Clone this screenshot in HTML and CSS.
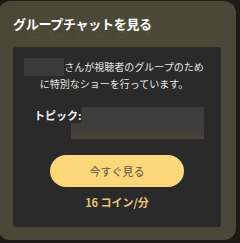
FILE: index.html
```html
<!DOCTYPE html>
<html lang="ja">
<head>
<meta charset="utf-8">
<link rel="stylesheet" href="styles.css">
</head>
<body>
<div class="modal">
  <div class="ghost">ッソをしています</div>
  <h1 class="title">グループチャットを見る</h1>
  <div class="card">
    <div class="desc">
      <span class="line"><span class="redact name"></span>さんが視聴者のグループのため</span>
      <span class="line">に特別なショーを行っています。</span>
    </div>
    <div class="topic">
      <div class="topic-row">
        <span class="topic-label">トピック:</span>
        <span class="redact topic-val"></span>
      </div>
      <div class="redact topic-val2"></div>
    </div>
    <button class="btn">今すぐ見る</button>
    <div class="price">16 コイン/分</div>
  </div>
</div>
</body>
</html>
```
FILE: styles.css
```css
html, body {
  margin: 0;
  padding: 0;
  background: #1d1a17;
  width: 240px;
  height: 243px;
  overflow: hidden;
  font-family: "Noto Sans CJK JP", "Noto Sans", sans-serif;
}
.modal {
  position: relative;
  margin: 1px 0 0 -2px;
  width: 238px;
  height: 239px;
  box-sizing: border-box;
  background: #4a4836;
  border-radius: 12px;
  padding: 0 15px 13px 15px;
  display: flex;
  flex-direction: column;
  overflow: hidden;
}
.ghost {
  position: absolute;
  left: -22px;
  top: 10px;
  font-size: 22px;
  color: rgba(255,255,255,0.04);
  white-space: nowrap;
  letter-spacing: 1px;
}
.title {
  position: relative;
  margin: 0;
  height: 46px;
  line-height: 46px;
  font-size: 13px;
  font-weight: 700;
  color: #ffffff;
  letter-spacing: -0.3px;
}
.card {
  position: relative;
  flex: 1;
  background: #2a2a2a;
  border-radius: 3px;
  display: flex;
  flex-direction: column;
  align-items: center;
  padding-top: 11px;
}
.desc {
  display: flex;
  flex-direction: column;
  align-items: center;
  padding-right: 6px;
  font-size: 10px;
  line-height: 15px;
  color: #e8e8e8;
}
.line {
  display: block;
  white-space: nowrap;
}
.redact {
  background: #3b3b3b;
}
.name {
  display: inline-block;
  width: 40px;
  height: 18px;
  vertical-align: -5px;
}
.topic {
  align-self: stretch;
  margin-top: 16px;
  display: flex;
  flex-direction: column;
}
.topic-row {
  display: flex;
  align-items: flex-start;
  padding-left: 21px;
  padding-right: 17px;
}
.topic-label {
  width: 48px;
  font-size: 11px;
  font-weight: 700;
  color: #f2f2f2;
  line-height: 16px;
}
.topic-val {
  flex: 1;
  height: 16px;
  background: #3d3d3d;
}
.topic-val2 {
  margin-left: 58px;
  margin-right: 17px;
  height: 16px;
  background: linear-gradient(180deg, #3d3d3d 0%, #433f38 60%, #4a4438 100%);
}
.btn {
  margin-top: 16px;
  width: 134px;
  height: 32px;
  border: none;
  border-radius: 16px;
  background: #fdd87b;
  color: #5a5040;
  font-family: "Noto Sans CJK JP", "Noto Sans", sans-serif;
  font-size: 11px;
  padding: 0;
}
.price {
  margin-top: 7px;
  font-size: 11px;
  font-weight: 700;
  color: #e8c47a;
  line-height: 16px;
}
```
